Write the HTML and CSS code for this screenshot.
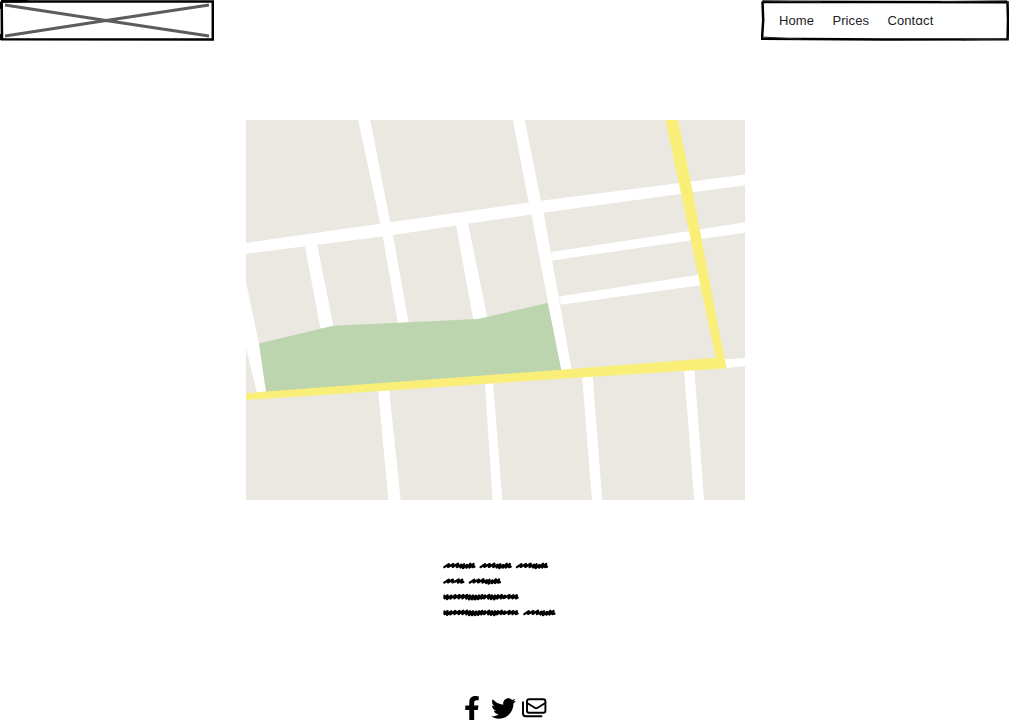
FILE: index.html
```html
<!DOCTYPE html>
<html lang="en">
<head>
<meta charset="utf-8">
<title>Contact</title>
<link rel="stylesheet" href="styles.css">
</head>
<body>
<div class="page">
  <header class="header">
    <svg class="logo" viewBox="0 0 214 42">
      <path class="logo-cross" d="M5 5 106 20.5 209 36M5 36 106 20.5 209 5"/>
      <path class="frame" d="M1.7 1.5H212.8L212.8 39.5 2 39.3 1.7 1.2"/>
      <path class="frame-heavy" d="M1 1H28M1 2V9M1 34V40M3 1.2H22"/>
    </svg>
    <nav class="nav">
      <svg class="nav-frame" viewBox="0 0 248 42">
        <path class="frame" d="M1.5 1.7 124 2 246.5 2.2 247 20 246.6 39.3 124 39.6 1 38.8 2.2 20 1.5 1.5"/>
        <path class="frame-thin" d="M1 1 60 2M180 1.6 246 .8 247 4M1 37 40 39.2M200 40 247 39"/>
      </svg>
      <a class="nav-link">Home</a>
      <a class="nav-link">Prices</a>
      <a class="nav-link">Cont<span class="round-a">a</span>ct</a>
    </nav>
  </header>

  <main class="main">
    <svg class="map" viewBox="246 120 499 380">
      <rect class="land" x="246" y="120" width="499" height="380"/>
      <g class="road">
        <path d="M246 243 380 223.8 541 200.7 680 183 745 174.6V185.2L680 194 541 213 384 236.3 246 253.7Z"/>
        <path d="M358.2 120H370.2L390.2 222 392.7 234 408.8 324H398L382.7 236 380.2 223Z"/>
        <path d="M512.8 120H524.8L541 201 543.7 213 572 372H561L548.2 304 531.2 213 528.7 202Z"/>
        <path d="M304.7 245H317.2L333.8 328H320.3Z"/>
        <path d="M455.5 222H467.7L487.8 320H473.3Z"/>
        <path d="M246 282 259 344 266.5 393H257L246 348Z"/>
        <path d="M551 252 690 231 745 222.3V232.8L690 240.5 552 260.5Z"/>
        <path d="M559 296.5 699 274.7 711 283.8 561 304.8Z"/>
        <path d="M720 359.8 745 358V366.3L720 368.5Z"/>
        <path d="M378 389H389L400.7 500H388.5Z"/>
        <path d="M484.8 382H493L502.2 500H492.6Z"/>
        <path d="M582 375H592.5L602.3 500H592Z"/>
        <path d="M684 369H694.4L704 500H694.2Z"/>
      </g>
      <path class="park" d="M259 343.5 333 325.8 478 319 547.8 303 561.5 371 266 392Z"/>
      <path class="highway" d="M665.5 120H678L691 183 715 310 726.6 368.3 561 378.8 246 400V393.3L266 391.6 561 369.8 715.8 357.7 705.5 310 679 184Z"/>
    </svg>

    <svg class="scribble" viewBox="0 0 120 60">
      <defs>
        <path id="squiggle" d="M1.3 5.8 5.8 2.8 5 5.6 10.4 2.8 9.6 5.6 15 2.4 14 5.8 18.5 3.4 17.5 6.2 21 3 20 6.8 24 3.6 23.5 6.4 27.4 2.4 26.6 6.2 30.6 2.6 29.6 5.8 31.4 5.4"/>
        <path id="squiggle-short" d="M1.3 5.8 5.8 2.8 5 5.6 9.8 2.8 9.4 5.6 12.4 4.6 15.8 2.6 15 5.8 19.2 2.8 18.2 5.8 20.3 5.2"/>
        <path id="squiggle-long" d="M1.5 3.2 1.5 5.8 4.6 2.8 4 6.6 8.2 3 7.4 6 12.4 2.6 11.4 5.8 16.6 2.6 15.6 5.8 20.4 2.4 19.4 5.8 24.2 2.4 23.2 6 27 3 26 6.8 30 3 29 6.8 33 3.2 32 6.8 36 3 35 6.6 39.2 2.6 38.2 6 42 3 41 5.8 46.2 2.4 45.2 6 49 3 48 6.6 52 3 51.2 6.8 55 2.8 54 6 58.8 2.4 57.8 5.8 62 3.2 61 5.6 66.6 2.6 65.6 5.8 70.4 2.8 69.4 5.8 73.8 2.8 72.8 5.8 74.6 5.2"/>
      </defs>
      <use href="#squiggle" x="0" y="1.3"/>
      <use href="#squiggle" x="36.3" y="1.3"/>
      <use href="#squiggle" x="72.6" y="1.3"/>
      <use href="#squiggle-short" x="0" y="16.8"/>
      <use href="#squiggle" x="25.5" y="16.8"/>
      <use href="#squiggle-long" x="0" y="32.5"/>
      <use href="#squiggle-long" x="0" y="48.3"/>
      <use href="#squiggle" x="80" y="48.3"/>
    </svg>
  </main>

  <footer class="footer">
    <svg class="icon facebook" viewBox="0 0 320 512"><path d="M279.14 288l14.22-92.66h-88.91v-60.13c0-25.35 12.42-50.06 52.24-50.06h40.42V6.26S260.43 0 225.36 0c-73.22 0-121.08 44.38-121.08 124.72v70.62H22.89V288h81.39v224h100.17V288z"/></svg>
    <svg class="icon twitter" viewBox="0 0 512 512"><path d="M459.37 151.716c.325 4.548.325 9.097.325 13.645 0 138.72-105.583 298.558-298.558 298.558-59.452 0-114.68-17.219-161.137-47.106 8.447.974 16.568 1.299 25.34 1.299 49.055 0 94.213-16.568 130.274-44.832-46.132-.975-84.792-31.188-98.112-72.772 6.498.974 12.995 1.624 19.818 1.624 9.421 0 18.843-1.3 27.614-3.573-48.081-9.747-84.143-51.98-84.143-102.985v-1.299c13.969 7.797 30.214 12.67 47.431 13.319-28.264-18.843-46.781-51.005-46.781-87.391 0-19.492 5.197-37.36 14.294-52.954 51.655 63.675 129.3 105.258 216.365 109.807-1.624-7.797-2.599-15.918-2.599-24.04 0-57.828 46.782-104.934 104.934-104.934 30.213 0 57.502 12.67 76.67 33.137 23.715-4.548 46.456-13.32 66.599-25.34-7.798 24.366-24.366 44.833-46.132 57.827 21.117-2.273 41.584-8.122 60.426-16.243-14.292 20.791-32.161 39.308-52.628 54.253z"/></svg>
    <svg class="icon mail" viewBox="0 0 25 20"><path class="mail-line" d="M1 4.2V15.5Q1 18.2 3.7 18.2H19.5"/><rect class="mail-line" x="5" y="1.2" width="18.4" height="13.6" rx="2"/><path class="mail-line" d="M5 5 12.8 9.8Q14.2 10.7 15.6 9.8L23.4 5"/></svg>
  </footer>
</div>
</body>
</html>
```

FILE: styles.css
```css
* { box-sizing: border-box; }
body { margin: 0; background: #fff; color: #000; }
svg { display: block; flex: none; }
.page { width: 1009px; height: 720px; overflow: hidden; display: flex; flex-direction: column; }
.header { display: flex; justify-content: space-between; height: 42px; }
.logo { width: 214px; height: 42px; }
.logo-cross { fill: none; stroke: #5c5c5c; stroke-width: 2.8; }
.frame { fill: none; stroke: #000; stroke-width: 2.5; }
.frame-heavy { fill: none; stroke: #000; stroke-width: 2.5; }
.frame-thin { fill: none; stroke: #222; stroke-width: 1; }
.nav {
  position: relative; width: 248px; height: 41px; padding-left: 18px;
  display: flex; align-items: center; gap: 18.3px;
  font: 13px/16px "Liberation Sans", Arial, sans-serif;
  letter-spacing: 0.1px;
}
.nav-frame { position: absolute; left: 0; top: 0; width: 248px; height: 42px; }
.nav-link { position: relative; color: #222; }
.round-a { font-family: Inter, sans-serif; font-size: 12.5px; line-height: 1; font-feature-settings: "cv11" 1; }
.main { display: flex; flex-direction: column; align-items: flex-start; padding-top: 78px; }
.map { width: 499px; height: 380px; margin-left: 246px; }
.land { fill: #ebe8e1; }
.road { fill: #fff; }
.park { fill: #bcd5ae; }
.highway { fill: #f9ef78; }
.scribble {
  width: 120px; height: 60px; margin: 60px 0 0 443px;
  fill: none; stroke: #000; stroke-width: 2.3; stroke-linejoin: round; stroke-linecap: round;
}
.footer { display: flex; align-items: flex-start; padding: 76px 0 0 464px; }
.facebook { width: 16px; height: 25px; }
.twitter { width: 25px; height: 25px; margin: 0 0 0 11px; }
.mail { width: 25px; height: 20px; margin: 2px 0 0 6px; }
.mail-line { fill: none; stroke: #000; stroke-width: 1.9; stroke-linecap: round; }
```
